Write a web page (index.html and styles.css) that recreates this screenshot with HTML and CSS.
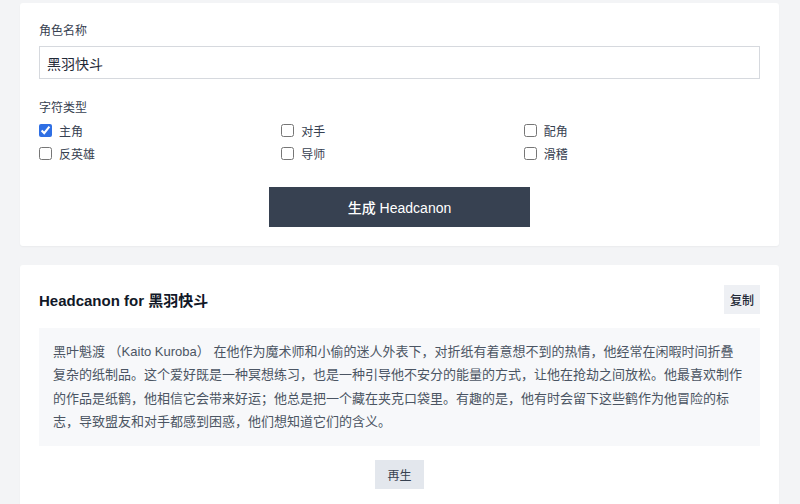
FILE: index.html
```html
<!DOCTYPE html>
<html lang="zh-CN">
<head>
    <meta charset="UTF-8">
    <meta name="viewport" content="width=device-width, initial-scale=1.0">
    <title>Headcanon 生成器</title>
    <link rel="stylesheet" href="styles.css">
</head>
<body>
    <div class="page">
        <!-- 生成表单 -->
        <form class="card form-card" onsubmit="return false">
            <label class="field-label" for="charName">角色名称</label>
            <input id="charName" class="text-input" type="text" value="黑羽快斗">

            <div class="field-label type-label">字符类型</div>
            <div class="type-grid">
                <label class="type-option"><input type="checkbox" checked> 主角</label>
                <label class="type-option"><input type="checkbox"> 对手</label>
                <label class="type-option"><input type="checkbox"> 配角</label>
                <label class="type-option"><input type="checkbox"> 反英雄</label>
                <label class="type-option"><input type="checkbox"> 导师</label>
                <label class="type-option"><input type="checkbox"> 滑稽</label>
            </div>

            <div class="actions">
                <button class="btn-primary" type="submit">生成 Headcanon</button>
            </div>
        </form>

        <!-- 生成结果 -->
        <div class="card result-card">
            <div class="result-header">
                <h2 class="result-title">Headcanon for 黑羽快斗</h2>
                <button class="btn-small" type="button">复制</button>
            </div>
            <div class="result-body">黑叶魁渡 （Kaito Kuroba） 在他作为魔术师和小偷的迷人外表下，对折纸有着意想不到的热情，他经常在闲暇时间折叠复杂的纸制品。这个爱好既是一种冥想练习，也是一种引导他不安分的能量的方式，让他在抢劫之间放松。他最喜欢制作的作品是纸鹤，他相信它会带来好运；他总是把一个藏在夹克口袋里。有趣的是，他有时会留下这些鹤作为他冒险的标志，导致盟友和对手都感到困惑，他们想知道它们的含义。</div>
            <div class="actions">
                <button class="btn-regen" type="button">再生</button>
            </div>
        </div>
    </div>
</body>
</html>
```

FILE: styles.css
```css
body {
    margin: 0;
    padding: 3px 21px 0 20px;
    background-color: #f3f4f6;
    font-family: "Liberation Sans", "Noto Sans CJK SC", sans-serif;
    color: #1f2937;
}
.card {
    background: white;
    border-radius: 3px;
    box-shadow: 0 1px 2px rgba(0,0,0,0.04);
}
.form-card {
    display: flex;
    flex-direction: column;
    padding: 20px 19px 19px;
}
.field-label {
    font-size: 12px;
    line-height: 16px;
    color: #374151;
    margin-bottom: 7px;
}
.text-input {
    height: 33px;
    box-sizing: border-box;
    border: 1px solid #d6d9de;
    border-radius: 0;
    padding: 0 7px;
    font-family: inherit;
    font-size: 14px;
    color: #1f2937;
    outline: none;
}
.type-label {
    margin-top: 21px;
    margin-bottom: 5px;
}
.type-grid {
    display: grid;
    grid-template-columns: repeat(3, 1fr);
    column-gap: 6px;
    row-gap: 5px;
}
.type-option {
    display: flex;
    align-items: center;
    gap: 7px;
    height: 18px;
    font-size: 12px;
    color: #374151;
}
.type-option input {
    margin: 0;
    width: 13px;
    height: 13px;
    accent-color: #2f6fe4;
}
.actions {
    display: flex;
    justify-content: center;
}
.form-card .actions {
    margin-top: 25px;
}
.btn-primary {
    width: 261px;
    height: 40px;
    border: none;
    border-radius: 0;
    background: #374151;
    color: white;
    font-family: inherit;
    font-size: 14px;
    font-weight: 500;
    cursor: pointer;
}
.result-card {
    margin-top: 19px;
    padding: 20px 19px 30px;
}
.result-header {
    display: flex;
    justify-content: space-between;
    align-items: center;
}
.result-title {
    margin: 0;
    font-size: 15px;
    font-weight: bold;
    color: #111827;
}
.btn-small {
    width: 36px;
    height: 29px;
    padding: 0;
    border: none;
    background: #eef0f4;
    color: #1f2937;
    font-family: inherit;
    font-size: 12px;
    font-weight: 500;
    cursor: pointer;
}
.result-body {
    margin-top: 14px;
    padding: 12px 14px;
    background: #f7f8fa;
    font-size: 13px;
    line-height: 23.4px;
    color: #4b5563;
}
.result-card .actions {
    margin-top: 14px;
}
.btn-regen {
    width: 49px;
    height: 29px;
    padding: 0;
    border: none;
    background: #e3e7ed;
    color: #374151;
    font-family: inherit;
    font-size: 12px;
    cursor: pointer;
}
```
